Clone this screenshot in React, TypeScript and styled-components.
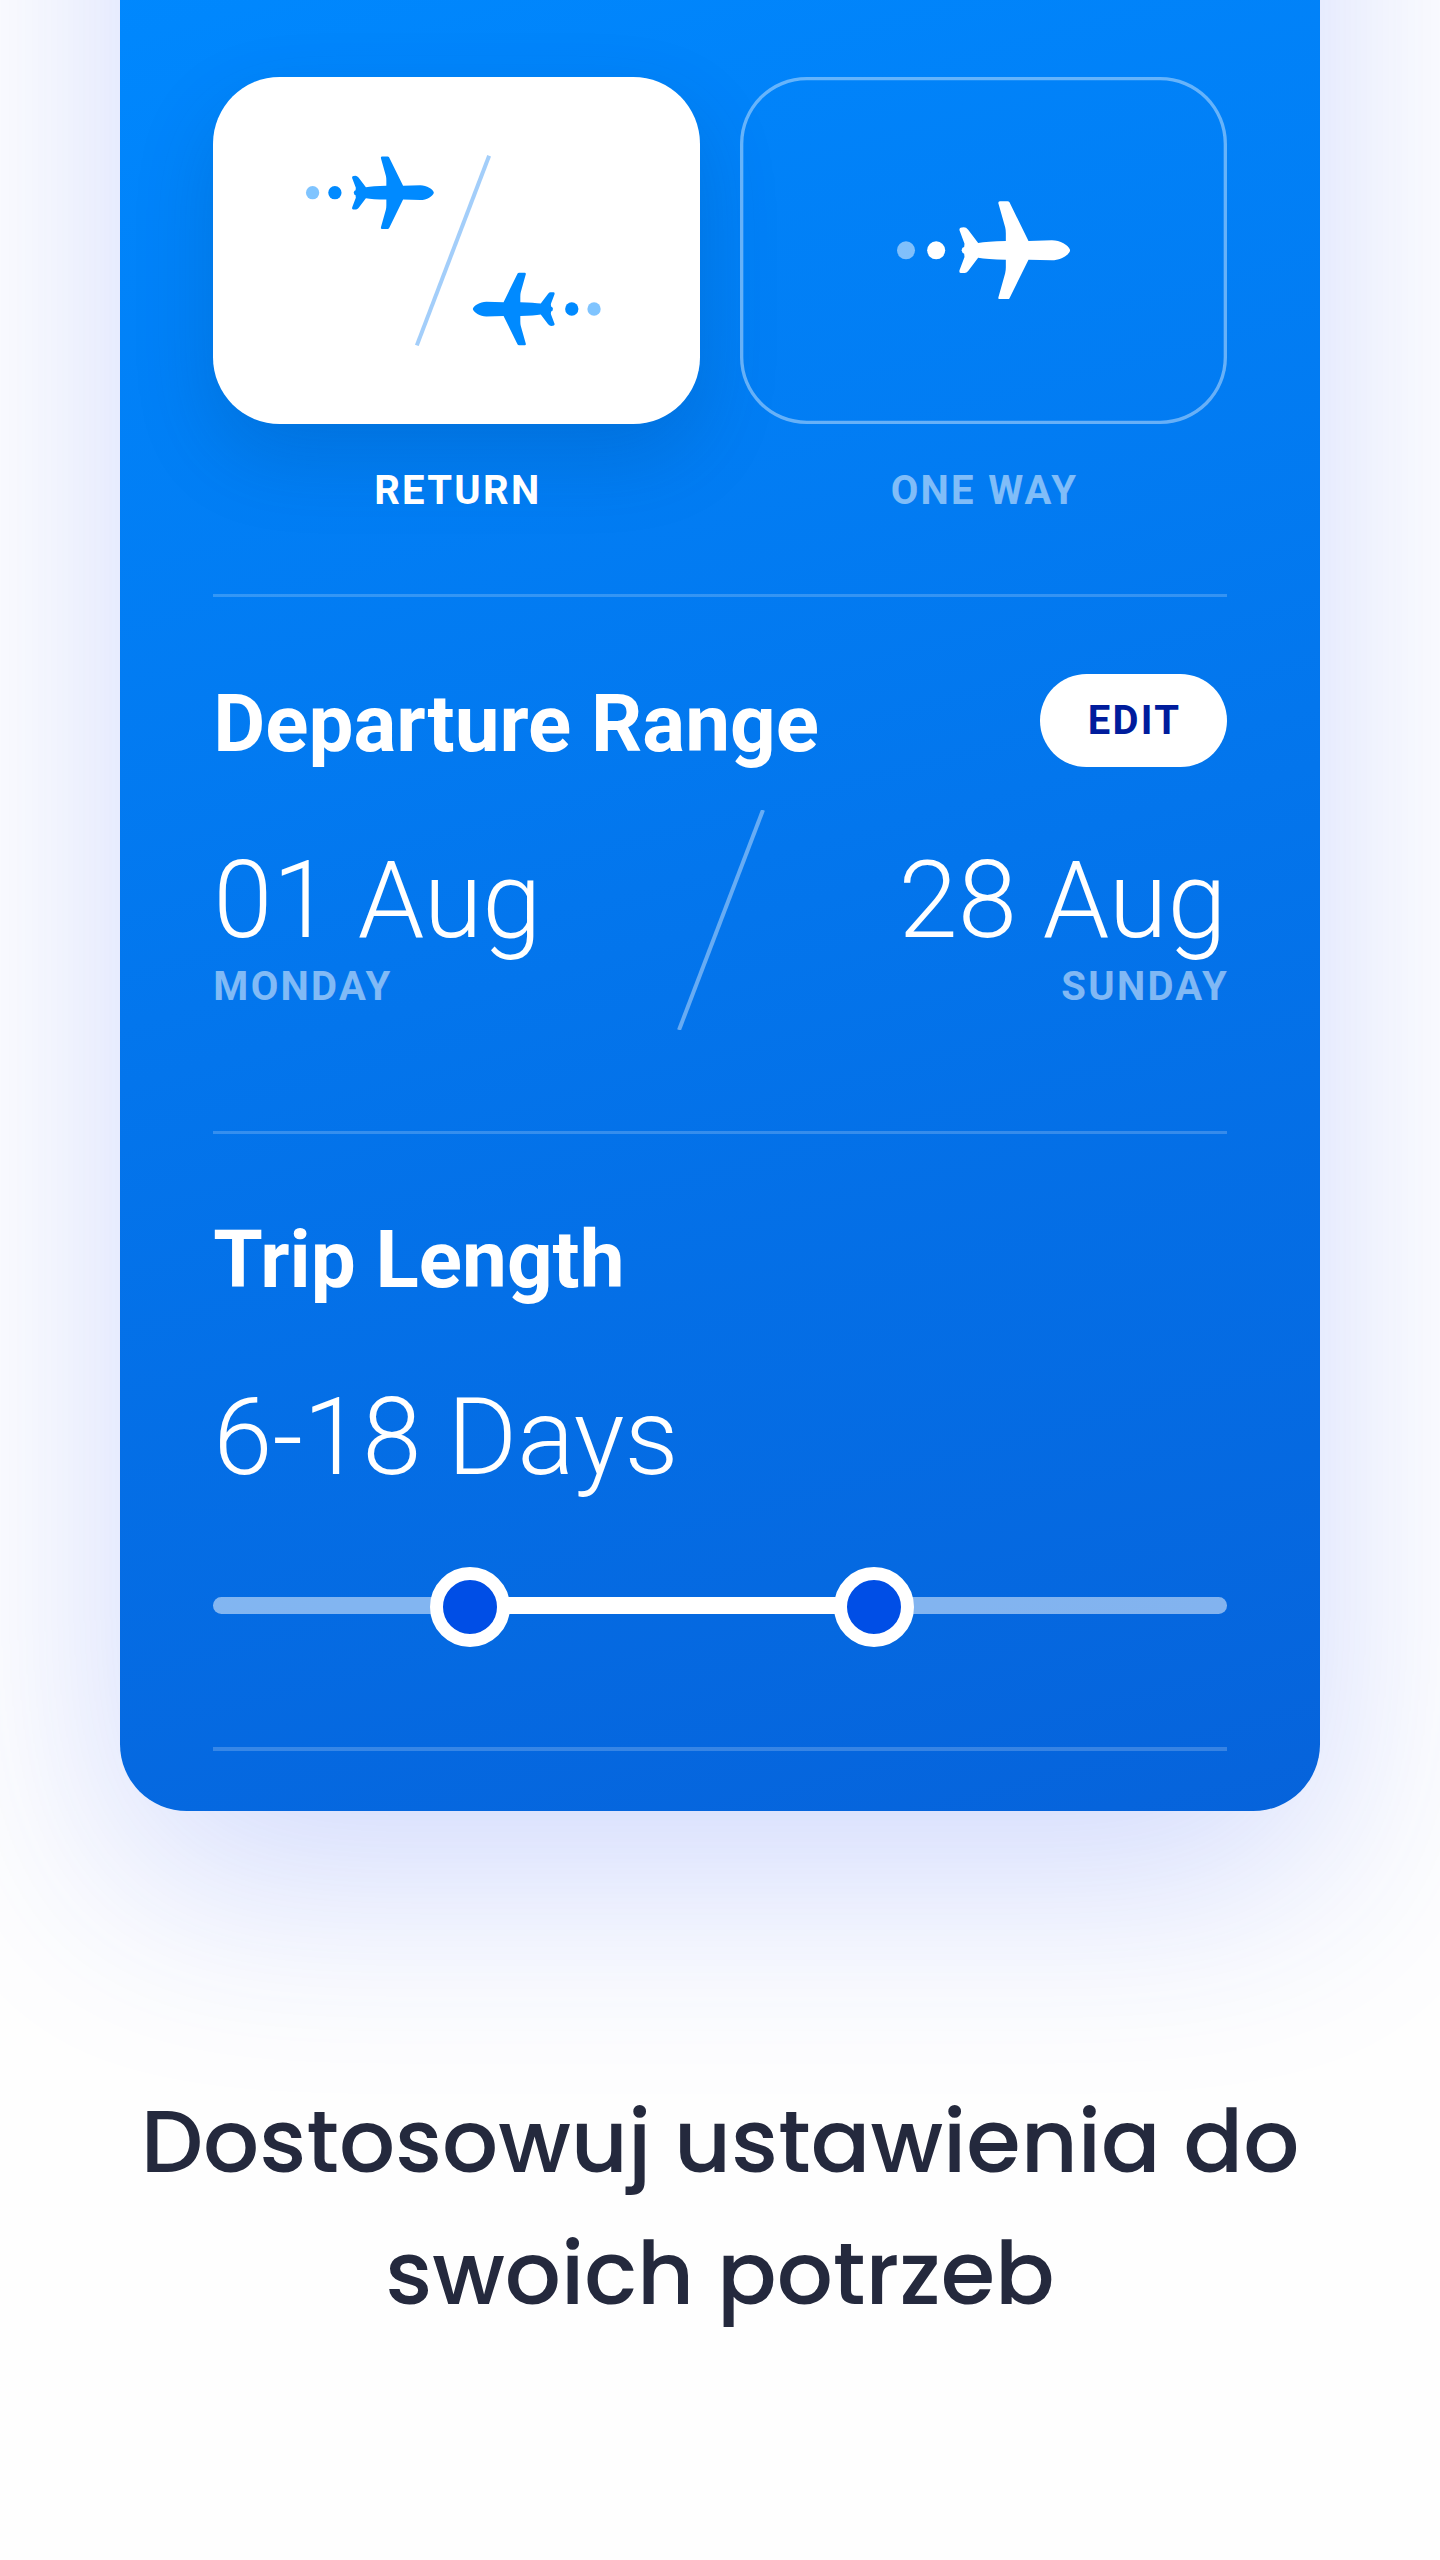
import React from 'react';
import styled, { createGlobalStyle } from 'styled-components';

const GlobalStyle = createGlobalStyle`
  *, *::before, *::after { box-sizing: border-box; }
  body { margin: 0; background: #fefefe; font-family: Roboto, "Liberation Sans", sans-serif; }
`;

const Page = styled.main`
  display: flex;
  flex-direction: column;
  align-items: center;
  height: 2560px;
  overflow: hidden;
`;

/* The panel starts above the top edge so that only its lower part shows. */
const Panel = styled.section`
  flex: none;
  width: 1200px;
  height: 2211px;
  margin-top: -400px;
  padding: 477px 93.33px 0;
  color: #fff;
  border-radius: 0 0 66.67px 66.67px;
  background: linear-gradient(165deg, #0088fe 15%, #0663db 100%);
  box-shadow: 0 67px 216px rgba(40, 80, 250, 0.21);
`;

const Options = styled.div`
  display: grid;
  grid-template-columns: 1fr 1fr;
  gap: 40px;
  height: 517px;
`;

const Option = styled.div`
  display: flex;
  flex-direction: column;
  align-items: center;
`;

const OptionTile = styled.div<{ $active?: boolean }>`
  display: flex;
  align-items: center;
  justify-content: center;
  width: 100%;
  height: 346.67px;
  border-radius: 66.67px;
  background: ${(p) => (p.$active ? '#fff' : 'transparent')};
  box-shadow: ${(p) =>
    p.$active ? '0 33px 80px rgba(0, 60, 120, 0.2)' : 'inset 0 0 0 3.33px rgba(255, 255, 255, 0.4)'};
`;

const Caption = styled.span<{ $dim?: boolean }>`
  font-size: 40px;
  line-height: 48px;
  font-weight: 700;
  letter-spacing: 2.3px;
  margin-right: -2.3px;
  color: ${(p) => (p.$dim ? 'rgba(255, 255, 255, 0.5)' : '#fff')};
`;

const OptionCaption = styled(Caption)`
  margin-top: 43px;
`;

const Divider = styled.hr`
  height: 3.33px;
  margin: 0;
  border: 0;
  background: rgba(255, 255, 255, 0.2);
`;

const Departure = styled.div`
  height: 533.33px;
  padding-top: 76.33px;
`;

const Trip = styled.div`
  height: 613.33px;
  padding-top: 76.33px;
`;

const TitleRow = styled.div`
  display: flex;
  justify-content: space-between;
  align-items: center;
  height: 93.33px;
`;

const Title = styled.h2`
  margin: 7px 0 0;
  font-size: 80px;
  line-height: 94px;
  font-weight: 700;
`;

const EditButton = styled.button`
  width: 186.67px;
  height: 93.33px;
  padding: 1px 0 0 2.3px;
  border: 0;
  border-radius: 46.67px;
  background: #fff;
  color: #001c9c;
  font: 700 40px/48px Roboto, "Liberation Sans", sans-serif;
  letter-spacing: 2.3px;
`;

const Dates = styled.div`
  display: flex;
  justify-content: space-between;
  align-items: flex-start;
  margin-top: 43.33px;
`;

const DateBlock = styled.div<{ $end?: boolean }>`
  display: flex;
  flex-direction: column;
  align-items: ${(p) => (p.$end ? 'flex-end' : 'flex-start')};
  width: 400px;
  padding-top: 27.67px;
`;

const Value = styled.div`
  font-size: 106.67px;
  line-height: 126px;
  font-weight: 300;
  white-space: nowrap;
`;

const Weekday = styled(Caption)`
  margin-top: -1px;
`;

const DaysValue = styled(Value)`
  margin-top: 71px;
`;

const Slider = styled.div`
  position: relative;
  height: 80px;
  margin-top: 66.67px;
  padding-top: 30px;
`;

const Track = styled.div`
  height: 16.67px;
  padding: 0 353px 0 257px;
  border-radius: 8.33px;
  background: rgba(255, 255, 255, 0.5);
`;

const Fill = styled.div`
  height: 100%;
  background: #fff;
`;

const Thumb = styled.span`
  position: absolute;
  top: 0;
  width: 80px;
  height: 80px;
  border: 13.33px solid #fff;
  border-radius: 50%;
  background: #004ee6;
`;

const Headline = styled.h1`
  margin: 265px 0 0;
  font-family: Poppins, Inter, "Open Sans", sans-serif;
  font-size: 88px;
  line-height: 132px;
  font-weight: 500;
  text-align: center;
  color: #24293d;
`;

const PLANE =
  'M570 211C567 197 541 181 515 181L445 183L388 67Q386 64 382 64L359 64Q353 65 355 71L375 142Q377 150 377 160L377 183Q320 184 294 189L264 149Q258 142 251 142Q236 142 238 151L253 191L252 201Q244 204 246 208Q242 211 246 214Q244 218 252 221L253 231L238 271Q236 280 244 279L254 279Q259 279 264 273L294 233Q320 238 377 239L377 262Q377 272 375 280L355 351Q353 357 359 358L382 358Q386 358 388 355L445 239L515 241C541 241 567 225 570 211Z';

const Flight = () => (
  <>
    <circle cx="77.5" cy="211" r="27" opacity="0.5" />
    <circle cx="168" cy="211" r="27" />
    <path d={PLANE} />
  </>
);

const ReturnIcon = () => (
  <svg width="303" height="192" viewBox="305.17 154.33 303 192" fill="#008aff">
    <g transform="translate(293.7 141.1) scale(0.2462)">
      <Flight />
    </g>
    <path d="M489.3 156L417 345.7" stroke="#a3cefa" strokeWidth="4" />
    <g transform="translate(613.3 361.3) scale(-0.2462)">
      <Flight />
    </g>
  </svg>
);

const OneWayIcon = () => (
  <svg width="173.33" height="98.33" viewBox="50.5 63 520 295" fill="#fff">
    <Flight />
  </svg>
);

const DateSlash = () => (
  <svg width="90" height="220" viewBox="0 0 90 220" fill="none">
    <path d="M88 0L4 220" stroke="#fff" strokeOpacity="0.4" strokeWidth="4" />
  </svg>
);

export default function App() {
  return (
    <>
      <GlobalStyle />
      <Page>
        <Panel>
          <Options>
            <Option>
              <OptionTile $active>
                <ReturnIcon />
              </OptionTile>
              <OptionCaption>RETURN</OptionCaption>
            </Option>
            <Option>
              <OptionTile>
                <OneWayIcon />
              </OptionTile>
              <OptionCaption $dim>ONE WAY</OptionCaption>
            </Option>
          </Options>
          <Divider />
          <Departure>
            <TitleRow>
              <Title>Departure Range</Title>
              <EditButton>EDIT</EditButton>
            </TitleRow>
            <Dates>
              <DateBlock>
                <Value>01 Aug</Value>
                <Weekday $dim>MONDAY</Weekday>
              </DateBlock>
              <DateSlash />
              <DateBlock $end>
                <Value>28 Aug</Value>
                <Weekday $dim>SUNDAY</Weekday>
              </DateBlock>
            </Dates>
          </Departure>
          <Divider />
          <Trip>
            <TitleRow>
              <Title>Trip Length</Title>
            </TitleRow>
            <DaysValue>6-18 Days</DaysValue>
            <Slider>
              <Track>
                <Fill />
              </Track>
              <Thumb style={{ left: 216.7 }} />
              <Thumb style={{ left: 620.2 }} />
            </Slider>
          </Trip>
          <Divider />
        </Panel>
        <Headline>
          Dostosowuj ustawienia do
          <br />
          swoich potrzeb
        </Headline>
      </Page>
    </>
  );
}
